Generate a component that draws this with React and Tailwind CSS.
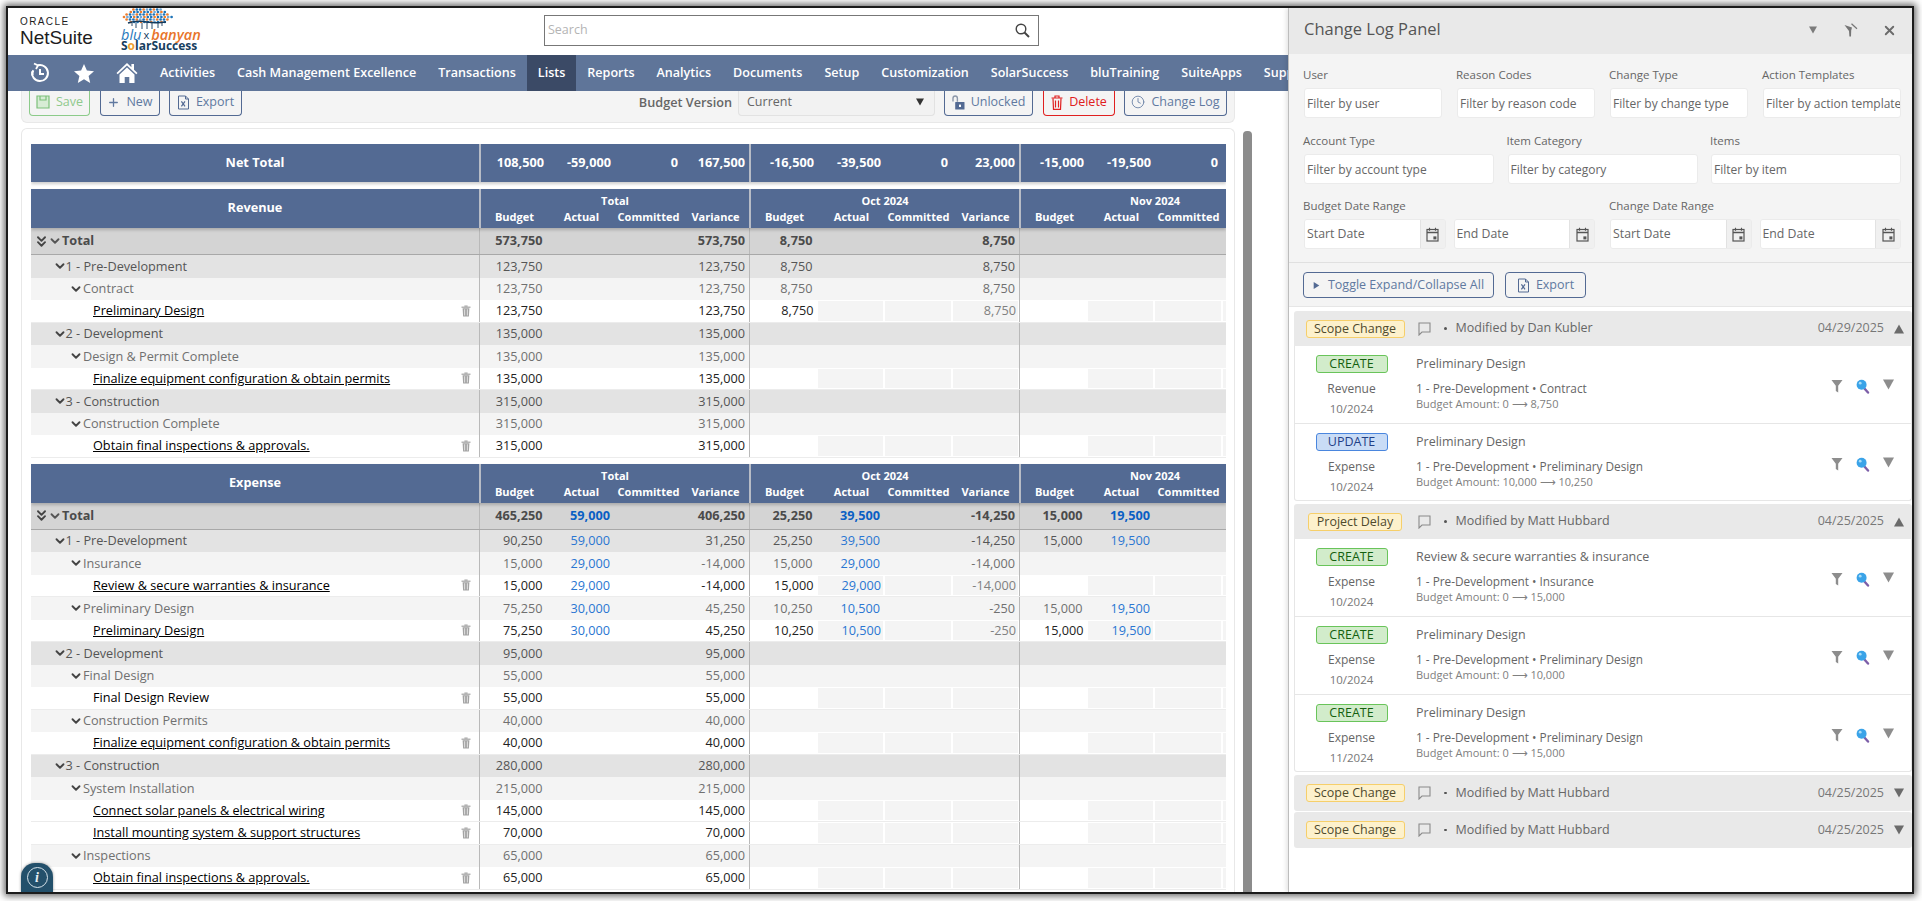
import React from 'react';
import { Plus, Clock, ChevronDown, ChevronsDown, X } from 'lucide-react';

// budget tables
const rev = [
  [0, 'Total', '573,750', '', '', '573,750', '8,750', '', '', '8,750'],
  [1, '1 - Pre-Development', '123,750', '', '', '123,750', '8,750', '', '', '8,750'],
  [2, 'Contract', '123,750', '', '', '123,750', '8,750', '', '', '8,750'],
  [3, 'Preliminary Design', '123,750', '', '', '123,750', '8,750', '', '', '8,750'],
  [1, '2 - Development', '135,000', '', '', '135,000'],
  [2, 'Design & Permit Complete', '135,000', '', '', '135,000'],
  [3, 'Finalize equipment configuration & obtain permits', '135,000', '', '', '135,000'],
  [1, '3 - Construction', '315,000', '', '', '315,000'],
  [2, 'Construction Complete', '315,000', '', '', '315,000'],
  [3, 'Obtain final inspections & approvals.', '315,000', '', '', '315,000'],
];

const exp = [
  [0, 'Total', '465,250', '59,000', '', '406,250', '25,250', '39,500', '', '-14,250', '15,000', '19,500'],
  [1, '1 - Pre-Development', '90,250', '59,000', '', '31,250', '25,250', '39,500', '', '-14,250', '15,000', '19,500'],
  [2, 'Insurance', '15,000', '29,000', '', '-14,000', '15,000', '29,000', '', '-14,000'],
  [3, 'Review & secure warranties & insurance', '15,000', '29,000', '', '-14,000', '15,000', '29,000', '', '-14,000'],
  [2, 'Preliminary Design', '75,250', '30,000', '', '45,250', '10,250', '10,500', '', '-250', '15,000', '19,500'],
  [3, 'Preliminary Design', '75,250', '30,000', '', '45,250', '10,250', '10,500', '', '-250', '15,000', '19,500'],
  [1, '2 - Development', '95,000', '', '', '95,000'],
  [2, 'Final Design', '55,000', '', '', '55,000'],
  [4, 'Final Design Review', '55,000', '', '', '55,000'],
  [2, 'Construction Permits', '40,000', '', '', '40,000'],
  [3, 'Finalize equipment configuration & obtain permits', '40,000', '', '', '40,000'],
  [1, '3 - Construction', '280,000', '', '', '280,000'],
  [2, 'System Installation', '215,000', '', '', '215,000'],
  [3, 'Connect solar panels & electrical wiring', '145,000', '', '', '145,000'],
  [3, 'Install mounting system & support structures', '70,000', '', '', '70,000'],
  [2, 'Inspections', '65,000', '', '', '65,000'],
  [3, 'Obtain final inspections & approvals.', '65,000', '', '', '65,000'],
];

const navItems = ['Activities', 'Cash Management Excellence', 'Transactions', 'Lists', 'Reports', 'Analytics', 'Documents', 'Setup', 'Customization', 'SolarSuccess', 'bluTraining', 'SuiteApps', 'Support'];

const rowStyle = {
  0: 'bg-[#d4d4d4] text-[#4b4b4b] font-bold h-[27px] border-b border-[#a8a8a8]',
  1: 'bg-[#e3e3e3] text-[#555] h-[22.5px]',
  2: 'bg-[#f4f4f4] text-[#707070] h-[22.5px]',
  3: 'bg-white text-[#222] h-[22.5px]',
  4: 'bg-white text-[#222] h-[22.5px]',
};

const labelPad = { 0: 'pl-[2px]', 1: 'pl-[22px]', 2: 'pl-[38px]', 3: 'pl-[62px]', 4: 'pl-[62px]' };

const TrashSolid = () => (
  <svg width="12" height="12" viewBox="0 0 12 12" fill="#a3a3a3">
    <rect x="1.5" y="1.6" width="9" height="1.2" />
    <rect x="4.4" y="0.5" width="3.2" height="1.2" />
    <path d="M2.6 3.3h6.8l-.5 8.2H3.1zM4.4 4.3v6.2h.7V4.3zm2.5 0v6.2h.7V4.3z" fillRule="evenodd" />
  </svg>
);

const TrashRed = () => (
  <svg width="12" height="15" viewBox="0 0 12 15" fill="none" stroke="#e02020" strokeWidth="1.2">
    <path d="M0.5 3h11M4 3V1h4v2" />
    <path d="M2 3.4l.5 11h7l.5-11" />
    <path d="M4.5 5.5v7M7.5 5.5v7" />
  </svg>
);

const Row = ({ row }) => {
  const [level, label, ...vals] = row;
  const isInput = level >= 3;
  const cells = Array.from({ length: 12 }, (_, i) => vals[i] || '');
  return (
    <div className={`flex items-stretch ${rowStyle[level]} ${isInput ? 'border-b border-[#ececec]' : ''}`}>
      <div className={`w-[448px] shrink-0 flex items-center ${labelPad[level]} ${level === 0 ? 'text-[#4b4b4b]' : ''}`}>
        {level === 0 && <ChevronsDown size={17} strokeWidth={2.6} className="text-[#444] -mr-[1px]" />}
        {level < 3 && (
          <ChevronDown
            size={14}
            strokeWidth={3.2}
            className={level === 0 ? 'text-[#555] -ml-[1px]' : level === 1 ? 'text-[#444] -mr-[1.5px]' : 'text-[#444]'}
          />
        )}
        {level >= 3 ? (
          <>
            <span className={`text-black ${level === 3 ? 'underline' : ''}`}>{label}</span>
            <span className="ml-auto mr-[7px]"><TrashSolid /></span>
          </>
        ) : (
          <span>{label}</span>
        )}
      </div>
      {cells.map((v, i) => {
        const blue = i % 4 === 1;
        const color = blue ? (level === 0 ? 'text-[#0a5fc4]' : 'text-[#2a76d2]') : '';
        const sep = i % 4 === 0 ? 'border-l border-[#b9b9b9]' : '';
        if (isInput && i >= 4) {
          const bg = i % 4 === 0 ? 'bg-white' : 'bg-[#f4f4f4]';
          const txt = i % 4 === 3 ? 'text-[#808080]' : color;
          return (
            <div key={i} className={`w-[67.5px] shrink-0 py-[1px] pl-[1px] pr-[1px] ${sep}`}>
              <div className={`h-full flex items-center justify-end pr-[2px] ${bg} ${txt}`}>{v}</div>
            </div>
          );
        }
        return (
          <div key={i} className={`w-[67.5px] shrink-0 flex items-center justify-end pr-[4px] ${sep} ${color}`}>{v}</div>
        );
      })}
    </div>
  );
};

const HeaderCols = ({ title }) => (
  <div className="flex h-[39px] bg-[#536a93] text-white font-bold relative z-10 shadow-[0_2px_3px_rgba(0,0,0,0.2)]">
    <div className="w-[448px] shrink-0 flex items-center justify-center text-[12.7px] pb-[1px]">{title}</div>
    {['Total', 'Oct 2024', 'Nov 2024'].map((g) => (
      <div key={g} className="w-[270px] shrink-0 border-l-2 border-[#b7bcc6] flex flex-col items-center text-[11px] pt-[4px]">
        <div className="h-[16px] leading-[16px]">{g}</div>
        <div className="flex w-full h-[16px] leading-[16px]">
          {['Budget', 'Actual', 'Committed', 'Variance'].map((c) => (
            <div key={c} className="w-[67.5px] text-center">{c}</div>
          ))}
        </div>
      </div>
    ))}
  </div>
);

const BudgetTable = ({ title, rows }) => (
  <div>
    <HeaderCols title={title} />
    {rows.map((r, i) => <Row key={i} row={r} />)}
  </div>
);

const NetTotal = () => {
  const groups = [['108,500', '-59,000', '0', '167,500'], ['-16,500', '-39,500', '0', '23,000'], ['-15,000', '-19,500', '0', '']];
  return (
    <div className="flex h-[38px] bg-[#536a93] text-white font-bold text-[12.7px] shadow-[0_2px_3px_rgba(0,0,0,0.2)]">
      <div className="w-[448px] shrink-0 flex items-center justify-center">Net Total</div>
      {groups.map((g, i) => (
        <div key={i} className="flex w-[270px] shrink-0 border-l-2 border-[#b7bcc6]">
          {g.map((v, j) => (
            <div key={j} className="w-[67.5px] flex items-center justify-end pr-[4px]">{v}</div>
          ))}
        </div>
      ))}
    </div>
  );
};

// small drawn icons
const ExcelIcon = ({ color = '#536a93' }) => (
  <svg width="13" height="15" viewBox="0 0 13 15" fill="none" stroke={color} strokeWidth="1">
    <path d="M1.5 1h7l3 3v10h-10z" />
    <path d="M8.5 1v3h3" />
    <path d="M4.4 6.4l3.6 5M8 6.4l-3.6 5" strokeWidth="1.2" />
  </svg>
);

const SaveIcon = () => (
  <svg width="14" height="14" viewBox="0 0 14 14" fill="#d7ecd5" stroke="#7cc07a" strokeWidth="1.2">
    <path d="M1 1h12v12H1z" />
    <path d="M4 1v4h6V1" fill="none" />
  </svg>
);

const LockOpenIcon = () => (
  <svg width="13" height="15" viewBox="0 0 13 15">
    <path d="M1 6.5V3.2a2.2 2.2 0 0 1 4.4 0v3.5" fill="none" stroke="#8d98aa" strokeWidth="1.4" />
    <rect x="3.2" y="7" width="9.3" height="7.5" rx="0.6" fill="#536a93" />
    <rect x="7" y="9.6" width="2" height="2.4" fill="#fff" />
  </svg>
);

const CalendarIcon = () => (
  <svg width="13" height="15" viewBox="0 0 13 15" fill="none" stroke="#555" strokeWidth="1.2">
    <rect x="1" y="2.5" width="11" height="11.5" />
    <path d="M1 5.5h11" strokeWidth="1.6" />
    <path d="M3.5 0.8v3M9.5 0.8v3" />
    <rect x="7.4" y="9.4" width="3" height="3" fill="#555" stroke="none" />
  </svg>
);

const CommentIcon = () => (
  <svg width="13" height="14" viewBox="0 0 13 14" fill="none" stroke="#8a8a8a" strokeWidth="1.1">
    <path d="M1 1h11v9H4l-3 3z" />
  </svg>
);

const FunnelIcon = () => (
  <svg width="12" height="14" viewBox="0 0 12 14" fill="#8d8d8d">
    <path d="M0.5 1h11L7.2 6.8V13.5L4.8 12V6.8z" />
  </svg>
);

const LensIcon = () => (
  <svg width="14" height="15" viewBox="0 0 14 15">
    <path d="M8 9l4 4.5" stroke="#7c5ea8" strokeWidth="2.4" strokeLinecap="round" />
    <circle cx="5.6" cy="5.8" r="5" fill="#3aa3e8" />
    <circle cx="4.2" cy="4.2" r="1.4" fill="#a7dcf8" />
  </svg>
);

const Tri = ({ up, right, size = 9, color = '#8d8d8d' }) => (
  <svg width={size} height={size} viewBox="0 0 10 10" fill={color}>
    <path d={right ? 'M1 0l8 5-8 5z' : up ? 'M5 0.5L10 9.5H0z' : 'M0 0.5h10L5 9.5z'} />
  </svg>
);

// pushpin with a slash through it, top right of the panel
const PinOffIcon = () => (
  <svg width="14" height="14" viewBox="0 0 14 14" fill="#757575">
    <path d="M0.5 2L8 4.6 7.2 7.6 7 13.5H5.4L5 8z" />
    <path d="M7.5 0.8l5.5 5" fill="none" stroke="#757575" strokeWidth="1.2" />
  </svg>
);

const HistoryIcon = () => (
  <svg width="22" height="22" viewBox="0 0 22 22" fill="none" stroke="#fff" strokeWidth="2">
    <path d="M9 3.3A8 8 0 1 1 3.1 9.5" />
    <path d="M3.6 13.2a8 8 0 0 1 .7-5" />
    <path d="M11 7v5h4" />
    <path d="M5 1.5l4 2-2 3.5" strokeWidth="1.8" />
  </svg>
);

const StarIcon = () => (
  <svg width="20" height="19" viewBox="0 0 20 19" fill="#fff">
    <path d="M10 0l2.9 6.6 7.1.7-5.4 4.7 1.6 7L10 15.3 3.8 19l1.6-7L0 7.3l7.1-.7z" />
  </svg>
);

const HomeIcon = () => (
  <svg width="22" height="22" viewBox="0 0 22 22" fill="#fff">
    <path d="M11 1L0.5 11l1.2 1.2L11 3.6l9.3 8.6 1.2-1.2L18 7.7V2h-2.6v3.2z" />
    <path d="M3.5 12.4L11 5.6l7.5 6.8V21h-5.2v-6H8.7v6H3.5z" />
  </svg>
);

// tree canopy of the bluBanyan mark
const canopyDots = [];
for (let r = 0; r < 6; r++) {
  const n = 15 - Math.abs(r - 3) * 2;
  for (let i = 0; i < n; i++) {
    const x = 26 + (i - (n - 1) / 2) * 3.4 + (r % 2) * 0.8;
    const y = 1.5 + r * 2.5;
    const c = (i * 7 + r * 3) % 3 === 0 ? '#ee7d2e' : (i + r) % 4 === 0 ? '#6fa8d8' : '#1f74b8';
    canopyDots.push({ x, y, c });
  }
}

const BanyanTree = () => (
  <svg width="52" height="21" viewBox="0 0 52 21" className="block">
    {canopyDots.map((d, i) => <circle key={i} cx={d.x} cy={d.y} r="1.35" fill={d.c} />)}
    <path d="M7 15c6-2 13-2 19-1s12 1 19 0" fill="none" stroke="#14395a" strokeWidth="1.4" />
    <path d="M11 15v3M15 15v5M21 15v6M26 14v7M31 15v6M37 15v5M41 15v3" fill="none" stroke="#14395a" strokeWidth="0.9" />
  </svg>
);

const Logos = () => (
  <div className="flex items-start h-[47px] shrink-0 bg-white">
    <div className="w-[113px] pl-[12px] pt-[9px] shrink-0 font-['Liberation_Sans',sans-serif] text-[#1d1d1d]">
      <div className="text-[10px] leading-[10px] tracking-[1.4px]">ORACLE</div>
      <div className="text-[19px] leading-[22px]">NetSuite</div>
    </div>
    <div className="shrink-0 w-[100px] h-[47px]">
      <BanyanTree />
      <div className="flex h-[11px] items-center italic text-[14.5px] leading-[11px] whitespace-nowrap">
        <span className="text-[#2a7abd]">blu</span>
        <span className="text-[#17405f] mx-[2px] not-italic text-[11px]">x</span>
        <span className="text-[#e8742a] font-semibold">banyan</span>
      </div>
      <div className="text-[#17405f] font-bold text-[12px] leading-[11px] whitespace-nowrap">
        S<span className="text-[#f0a030]">o</span>larSuccess
      </div>
    </div>
    <div className="ml-[323px] mt-[7px] w-[495px] h-[31px] shrink-0 border border-[#777] flex items-center pl-[3px] pr-[8px]">
      <span className="text-[#b4b4b4] text-[12.5px]">Search</span>
      <svg className="ml-auto" width="15" height="15" viewBox="0 0 15 15" fill="none" stroke="#444" strokeWidth="1.4">
        <circle cx="6" cy="6" r="4.8" />
        <path d="M9.5 9.5l4.5 4.5" strokeWidth="2" />
      </svg>
    </div>
  </div>
);

const Nav = () => (
  <div className="flex items-stretch h-[36px] shrink-0 bg-[#5f7599] text-white overflow-hidden">
    <div className="flex items-center shrink-0 w-[141px] pl-[21px]">
      <span className="w-[44px]"><HistoryIcon /></span>
      <span className="w-[43px] flex justify-start pl-[1px]"><StarIcon /></span>
      <span><HomeIcon /></span>
    </div>
    {navItems.map((n) => (
      <div key={n} className={`flex items-center shrink-0 px-[11px] text-[12.55px] font-semibold ${n === 'Lists' ? 'bg-[#3b4a66]' : ''}`}>{n}</div>
    ))}
  </div>
);

const Btn = ({ className, children }) => (
  <div className={`h-[25px] pb-[2px] flex items-center justify-center gap-[6px] shrink-0 border border-t-0 rounded-b-[4px] text-[12.5px] ${className}`}>{children}</div>
);

const Toolbar = () => (
  <div className="h-[32px] flex items-start bg-[#f4f4f4] border border-t-0 border-[#e8e8e8] rounded-b-[6px] pl-[7px] pr-[7px] text-[12.5px]">
    <Btn className="w-[61px] border-[#8ccb8a] text-[#8fc98c]"><SaveIcon />Save</Btn>
    <Btn className="w-[60px] ml-[10px] border-[#536a93] text-[#6079a0]"><Plus size={13} strokeWidth={2.4} />New</Btn>
    <Btn className="w-[73px] ml-[9px] border-[#536a93] text-[#6079a0]"><ExcelIcon />Export</Btn>
    <div className="ml-auto flex items-center h-[25px] pb-[2px] font-semibold text-[12.7px] text-[#666] mr-[6px]">Budget Version</div>
    <div className="w-[197px] h-[25px] pb-[2px] shrink-0 flex items-center justify-between bg-[#f2f2f2] border border-t-0 border-[#e2e2e2] rounded-b-[4px] pl-[8px] pr-[10px] text-[#666]">
      Current
      <Tri color="#333" size={8} />
    </div>
    <Btn className="w-[89px] ml-[9px] border-[#536a93] text-[#6079a0]"><LockOpenIcon />Unlocked</Btn>
    <Btn className="w-[72px] ml-[10px] border-[#e02020] text-[#e02020]"><TrashRed />Delete</Btn>
    <Btn className="w-[103px] ml-[9px] border-[#536a93] text-[#6079a0]"><Clock size={14} strokeWidth={1.4} />Change Log</Btn>
  </div>
);

const LeftPane = () => (
  <div className="w-[1280px] shrink-0 h-full flex flex-col overflow-hidden relative">
    <Logos />
    <Nav />
    <div className="flex flex-1 min-h-0 pl-[13px]">
      <div className="w-[1214px] shrink-0 flex flex-col">
        <Toolbar />
        <div className="mt-[5px] flex-1 min-h-0 overflow-hidden bg-white border border-b-0 border-[#e8e8e8] rounded-t-[6px] pt-[15px] pl-[9px] pr-[8px]">
          <div className="w-[1195px] overflow-hidden text-[12.7px]">
            <NetTotal />
            <div className="h-[7px]" />
            <BudgetTable title="Revenue" rows={rev} />
            <div className="h-[6px]" />
            <BudgetTable title="Expense" rows={exp} />
          </div>
        </div>
      </div>
      <div className="ml-[8px] mt-[40px] w-[9px] flex-1 max-w-[9px] bg-[#8c8c8c] rounded-t-[4px]" />
    </div>
    <div className="absolute left-[13px] bottom-0 w-[32px] h-[29px] bg-[#23506b] rounded-t-[14px] flex items-center justify-center shadow-[0_0_3px_rgba(0,0,0,0.4)]">
      <div className="w-[21px] h-[21px] rounded-full border-[1.5px] border-[#d6e2ea] text-[#e6eef3] flex items-center justify-center font-['Liberation_Serif',serif] italic font-bold text-[14px]">i</div>
    </div>
  </div>
);

// change log panel
const Field = ({ label, placeholder }) => (
  <div>
    <div className="h-[18px] leading-[18px] -ml-[1px] text-[11.5px] text-[#666]">{label}</div>
    <div className="mt-[4px] h-[30px] bg-white border border-[#ebebeb] rounded-[3px] flex items-center pl-[2px] pt-[1px] text-[12px] text-[#666] whitespace-nowrap overflow-hidden">{placeholder}</div>
  </div>
);

const DateInput = ({ placeholder }) => (
  <div className="flex h-[30px] flex-1 border border-[#ebebeb] rounded-[3px] overflow-hidden">
    <div className="flex-1 bg-white flex items-center pl-[2px] text-[12.3px] text-[#666]">{placeholder}</div>
    <div className="w-[25px] bg-[#f0f0f0] border-l border-[#e2e2e2] flex items-center justify-center"><CalendarIcon /></div>
  </div>
);

const DateRange = ({ label }) => (
  <div>
    <div className="h-[18px] leading-[18px] -ml-[1px] text-[11.5px] text-[#666]">{label}</div>
    <div className="mt-[4px] flex gap-[8px]">
      <DateInput placeholder="Start Date" />
      <DateInput placeholder="End Date" />
    </div>
  </div>
);

const ActionBadge = ({ type }) => (
  <div className={`w-[72px] h-[18px] mx-auto rounded-[3px] border text-[12.5px] leading-[16px] text-center ${type === 'CREATE' ? 'bg-[#d2eccb] border-[#69c45a] text-[#14600f]' : 'bg-[#c9dcf6] border-[#4a86de] text-[#1f3f86]'}`}>{type}</div>
);

const LogItem = ({ type, acct, date, title, path, amount, h, last }) => (
  <div className={`flex ${h} pt-[9px] ${last ? '' : 'border-b border-[#e6e6e6]'}`}>
    <div className="w-[113px] shrink-0 text-center text-[12px] text-[#666]">
      <ActionBadge type={type} />
      <div className="mt-[7px] h-[18px] leading-[18px]">{acct}</div>
      <div className="mt-[2px] h-[18px] leading-[18px] text-[11.5px] text-[#777]">{date}</div>
    </div>
    <div className="ml-[8px] text-[#666]">
      <div className="h-[18px] leading-[18px] text-[12.5px]">{title}</div>
      <div className="mt-[7px] h-[17px] leading-[17px] text-[11.8px]">{path}</div>
      <div className="h-[14px] leading-[14px] text-[11px] text-[#808080]">{amount}</div>
    </div>
    <div className="ml-auto flex items-start pt-[24px] pr-[17px]">
      <FunnelIcon />
      <span className="ml-[13px]"><LensIcon /></span>
      <span className="ml-[13px]"><Tri size={11} /></span>
    </div>
  </div>
);

const GroupHead = ({ tag, user, date, open, h, tagW }) => (
  <div className={`flex items-center ${h} bg-[#e9e9e9] rounded-t-[3px] ${open ? '' : 'rounded-b-[3px]'}`}>
    <div className="w-[122px] shrink-0 flex justify-center">
      <div className={`${tagW} h-[18px] rounded-[3px] border border-[#f6cf6a] bg-[#fdf1cc] text-[12.5px] text-[#4f4a2c] leading-[16px] text-center`}>{tag}</div>
    </div>
    <span className="ml-[2px]"><CommentIcon /></span>
    <span className="ml-[13px] w-[2.5px] h-[2.5px] rounded-full bg-[#555]" />
    <span className="ml-[9px] text-[12.5px] text-[#666]">Modified by {user}</span>
    <span className="ml-auto text-[12.5px] text-[#777]">{date}</span>
    <span className="ml-[10px] mr-[8px]"><Tri up={open} size={10} color="#6b6b6b" /></span>
  </div>
);

const Panel = () => (
  <div className="flex-1 h-full flex flex-col bg-white border-l border-[#bdbdbd] shadow-[-2px_0_4px_rgba(0,0,0,0.1)] relative">
    <div className="h-[46px] shrink-0 bg-[#e9e9e9] flex items-center pl-[15px] pr-[15px] pb-[2px]">
      <span className="text-[16.5px] text-[#555] -mt-[2px]">Change Log Panel</span>
      <span className="ml-auto"><Tri size={8} color="#7b7b7b" /></span>
      <span className="ml-[27px]"><PinOffIcon /></span>
      <X size={15} strokeWidth={3} className="ml-[24px] text-[#6b6b6b]" />
    </div>
    <div className="shrink-0 bg-[#f4f4f4] pl-[15px] pr-[11px] pt-[12px] pb-[13px] border-b border-[#e0e0e0]">
      <div className="grid grid-cols-4 gap-x-[15px]">
        <Field label="User" placeholder="Filter by user" />
        <Field label="Reason Codes" placeholder="Filter by reason code" />
        <Field label="Change Type" placeholder="Filter by change type" />
        <Field label="Action Templates" placeholder="Filter by action template" />
      </div>
      <div className="grid grid-cols-3 gap-x-[13.5px] mt-[14px]">
        <Field label="Account Type" placeholder="Filter by account type" />
        <Field label="Item Category" placeholder="Filter by category" />
        <Field label="Items" placeholder="Filter by item" />
      </div>
      <div className="grid grid-cols-2 gap-x-[15px] mt-[13px]">
        <DateRange label="Budget Date Range" />
        <DateRange label="Change Date Range" />
      </div>
    </div>
    <div className="shrink-0 bg-[#f4f4f4] h-[44px] pl-[14px] pt-[9px] flex items-start gap-[11px] border-b border-[#e6e6e6] text-[12.5px] text-[#6079a0]">
      <div className="w-[191px] h-[26px] flex items-center justify-center gap-[8px] border border-[#536a93] rounded-[4px]"><Tri right size={7} color="#536a93" />Toggle Expand/Collapse All</div>
      <div className="w-[81px] h-[26px] flex items-center justify-center gap-[6px] border border-[#536a93] rounded-[4px]"><ExcelIcon />Export</div>
    </div>
    <div className="pl-[5px] pt-[4px]">
      <GroupHead tag="Scope Change" tagW="w-[99px]" user="Dan Kubler" date="04/29/2025" open h="h-[35px]" />
      <div className="bg-white border border-t-0 border-[#e6e6e6] rounded-b-[3px]">
        <LogItem h="h-[78px]" type="CREATE" acct="Revenue" date="10/2024" title="Preliminary Design" path="1 - Pre-Development • Contract" amount="Budget Amount: 0 ⟶ 8,750" />
        <LogItem h="h-[76px]" last type="UPDATE" acct="Expense" date="10/2024" title="Preliminary Design" path="1 - Pre-Development • Preliminary Design" amount="Budget Amount: 10,000 ⟶ 10,250" />
      </div>
      <div className="mt-[3px]">
        <GroupHead tag="Project Delay" tagW="w-[94px]" user="Matt Hubbard" date="04/25/2025" open h="h-[35px]" />
      </div>
      <div className="bg-white border border-t-0 border-[#e6e6e6] rounded-b-[3px]">
        <LogItem h="h-[78px]" type="CREATE" acct="Expense" date="10/2024" title="Review & secure warranties & insurance" path="1 - Pre-Development • Insurance" amount="Budget Amount: 0 ⟶ 15,000" />
        <LogItem h="h-[78px]" type="CREATE" acct="Expense" date="10/2024" title="Preliminary Design" path="1 - Pre-Development • Preliminary Design" amount="Budget Amount: 0 ⟶ 10,000" />
        <LogItem h="h-[76px]" last type="CREATE" acct="Expense" date="11/2024" title="Preliminary Design" path="1 - Pre-Development • Preliminary Design" amount="Budget Amount: 0 ⟶ 15,000" />
      </div>
      <div className="mt-[3px]">
        <GroupHead tag="Scope Change" tagW="w-[99px]" user="Matt Hubbard" date="04/25/2025" h="h-[36px]" />
      </div>
      <div className="mt-[1px]">
        <GroupHead tag="Scope Change" tagW="w-[99px]" user="Matt Hubbard" date="04/25/2025" h="h-[36px]" />
      </div>
    </div>
  </div>
);

export default function App() {
  return (
    <div className="w-[1922px] h-[901px] bg-white overflow-hidden pt-[6px] pl-[6px] font-['Open_Sans',sans-serif]">
      <div className="w-[1908px] h-[888px] border-2 border-[#1c1c1c] shadow-[0_0_7px_2px_rgba(0,0,0,0.6)] flex overflow-hidden bg-white">
        <LeftPane />
        <Panel />
      </div>
    </div>
  );
}
